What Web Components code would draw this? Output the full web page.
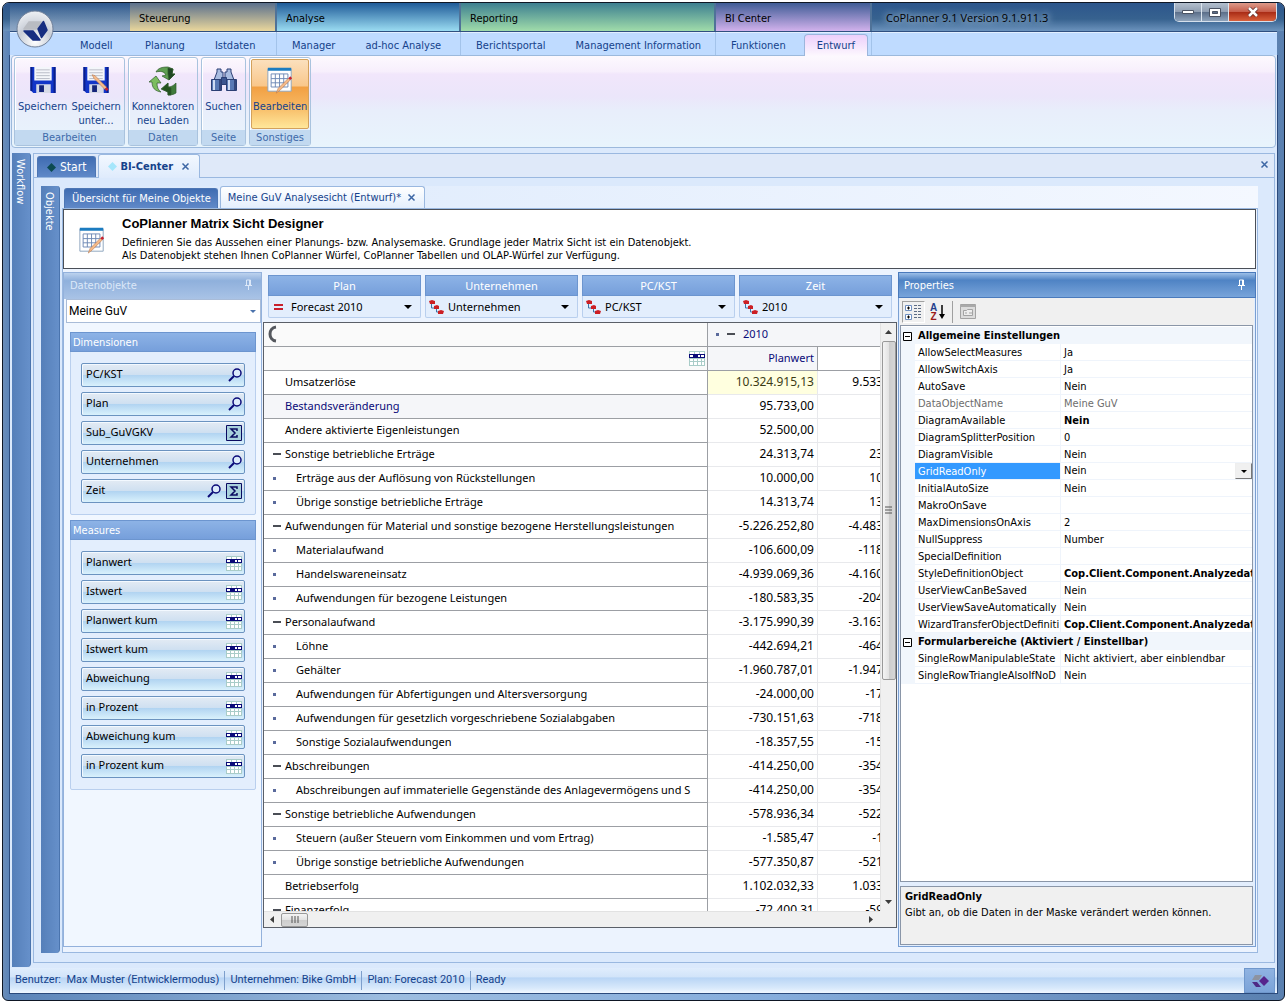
<!DOCTYPE html>
<html lang="de">
<head>
<meta charset="utf-8">
<title>CoPlanner 9.1</title>
<style>
  :root {
    --ui: "DejaVu Sans Condensed", Roboto, sans-serif;
    --grid: "Noto Sans", "Open Sans", sans-serif;
    --ink: #15428b;
    --line: #9ab8e0;
    --line-soft: #b9cfee;
    --head: linear-gradient(#8db3e6, #769fdb);
  }
  html, body { height: 100%; }
  body {
    margin: 0;
    padding: 2px;
    box-sizing: border-box;
    background: #fff;
    font: 11px/14px var(--ui);
    color: #000;
    overflow: hidden;
  }
</style>
</head>
<body>
<app-window>
  <ribbon-bar slot="ribbon"></ribbon-bar>
  <ribbon-body slot="ribbon">
    <ribbon-panel label="Bearbeiten">
      <ribbon-button icon="save">Speichern</ribbon-button>
      <ribbon-button icon="saveAs">Speichern<br>unter...</ribbon-button>
    </ribbon-panel>
    <ribbon-panel label="Daten">
      <ribbon-button icon="reload">Konnektoren<br>neu Laden</ribbon-button>
    </ribbon-panel>
    <ribbon-panel label="Seite">
      <ribbon-button icon="search">Suchen</ribbon-button>
    </ribbon-panel>
    <ribbon-panel label="Sonstiges">
      <ribbon-button icon="design" active>Bearbeiten</ribbon-button>
    </ribbon-panel>
  </ribbon-body>
  <dock-bar label="Workflow" slot="dock"></dock-bar>
  <outer-panel>
    <dock-bar label="Objekte" slot="dock"></dock-bar>
    <inner-panel>
      <page-banner slot="banner"></page-banner>
      <side-panel>
        <field-box label="Dimensionen"></field-box>
        <field-box label="Measures"></field-box>
      </side-panel>
      <matrix-view></matrix-view>
      <property-panel></property-panel>
    </inner-panel>
  </outer-panel>
  <status-bar slot="status"></status-bar>
</app-window>

<script>
const floppy = `
  <path d="M1 1h26v27H4l-3-3z" fill="#1235c8"/><path d="M1 1h2v25H1zM25 1h2v27h-2z" fill="#0a1f8a"/>
  <path d="M5 1h18v14H5z" fill="#f4f6fa"/><path d="M7 4h14M7 7h14M7 10h14M7 13h14" stroke="#b8bcc6"/>
  <path d="M7 19h15v9H7z" fill="#d6dae6"/><path d="M10 20h5v7h-5z" fill="#14247a"/>`;
const pencil = (x, y) => `<g transform="translate(${x} ${y})">
  <path d="M1 1l3 1 12 12-2 2L3 5z" fill="#f4b988" stroke="#b8764c" stroke-width=".6"/>
  <path d="M14 16l2-2 2 2-2 2z" fill="#c8202c"/></g>`;
const pencilUp = `<path d="M10 29l2-5 11-11 2 2-11 11z" fill="#f4b988" stroke="#b8764c" stroke-width=".6"/>
  <path d="M23 13l2-2 2 2-2 2z" fill="#c8202c"/>`;
const sheet = `
  <path d="M1 3h25v24H1z" fill="#fff" stroke="#8aa2bc"/><path d="M1 2h25v3H1z" fill="#1c7cc0"/>
  <path d="M4.500 8.500h18v14h-18zM4.500 13.500h18M4.500 18h18M9 8.500v14M13.500 8.500v14M18 8.500v14" fill="none" stroke="#6a86b4"/>`;

// name: [width, height, viewBox, body]
const ICONS = {
  save: [28, 28, "0 0 28 29", floppy],
  saveAs: [28, 28, "0 0 28 29", floppy + pencil(9, 8)],
  reload: [30, 30, "0 0 30 30", `
    <g stroke="#2f5a2c" stroke-width=".7">
    <path d="M8 6c2-4 6-5 12-5l5 2-1 5 3 0-6 6-7-4 4-1c-2-4-6-4-10-3z" fill="#5f9e52"/>
    <path d="M20 2l5 1-1 5 3 0-6 6-1-6z" fill="#1f4722"/>
    <path d="M1 16l7-6 5 7-4 0c0 4 1 7 4 9-6-1-9-4-9-10z" fill="#7cbd5f"/>
    <path d="M28 17v10c-3 2-6 2-8 2v-3l-7-3 7-6v4c3 0 5-1 8-4z" fill="#3f7a3a"/>
    <path d="M20 29v-3l-6-3 6-6v4l3 1v7z" fill="#23521f"/></g>`],
  search: [28, 28, "0 0 28 28", `
    <g fill="#5878b4" stroke="#2b3f74">
    <path d="M7 3h4v3h2v6h2V6h2V3h4v3l3 8H4l3-8z" fill="#a9bce0"/>
    <path d="M1.500 13.500h10v11h-10zM16.500 13.500h10v11h-10z"/>
    <path d="M11.500 11.500h5v7h-5z" fill="#3c5690"/></g>
    <path d="M4 14v10M19 14v10" stroke="#cfdcf4" stroke-width="2"/><path d="M10 14v10M25 14v10" stroke="#33477e" stroke-width="2"/>`],
  design: [28, 28, "0 0 28 30", sheet + pencilUp],
  orb: [38, 38, "0 0 38 38", `
    <defs><radialGradient id="o" cx=".5" cy=".85" r=".9"><stop offset="0" stop-color="#fff"/><stop offset=".5" stop-color="#c9ced7"/><stop offset="1" stop-color="#f3f5f8"/></radialGradient></defs>
    <circle cx="19" cy="19" r="18" fill="url(#o)" stroke="#6f7f98"/>
    <g stroke-width="1.500" stroke-linejoin="round">
    <path d="M13 12h12l-5 7H8z" fill="#b9bcc2" stroke="#b9bcc2"/>
    <path d="M8 21h9l7 9h-7z" fill="#172e80" stroke="#172e80"/>
    <path d="M27.500 11.500L31 20l-5.500 7.500L22 19z" fill="#172e80" stroke="#172e80"/></g>`],
  logo: [18, 14, "0 0 18 14", `
    <path d="M4 1h7L8 6H1z" fill="#8d93a0"/><path d="M1 8h5l4 5H5z" fill="#4f2a86"/><path d="M8 7l5-5 5 5-5 5z" fill="#56248c"/>`],
  close: [9, 9, "0 0 9 9", `<path d="M1.500 1.500l6 6M7.500 1.500l-6 6" stroke="#3c66a4" stroke-width="1.500"/>`],
  pin: [9, 11, "0 0 9 11", `<path d="M2.500 6V1h4v5M1 6.500h7M4.500 7v4M5.500 1v5" fill="none" stroke="currentColor"/>`],
  arrow: [8, 4, "0 0 8 4", `<path d="M0 0h8L4 4z" fill="currentColor"/>`],
  arrowSmall: [6, 3, "0 0 6 3", `<path d="M0 0h6L3 3z" fill="currentColor"/>`],
  equal: [13, 6, "0 0 13 6", `<path d="M2 1h9M2 5h9" stroke="#c8202c" stroke-width="2"/>`],
  tree: [15, 14, "0 0 15 14", `
    <path d="M2.500 3v5h5M7.500 8v4h4" fill="none" stroke="#3c74a8"/>
    <path d="M0 1l3-1 3 1v3H1zM5 6l3-1 2 1v3H5zM9 11l3-1 3 1-1 3H9z" fill="#cc1f24"/>`],
  lens: [14, 14, "0 0 14 14", `<circle cx="9" cy="5" r="4" fill="#dcebfb" stroke="#0a0a78" stroke-width="1.500"/><path d="M6 8l-5 5" stroke="#0a0a78" stroke-width="2"/>`],
  sum: [16, 16, "0 0 16 16", `<path d="M.5.5h15v15H.5z" fill="#a8d0dc" stroke="#0a0a60"/><path d="M11 6V4H5l4 4-4 4h6v-2" fill="none" stroke="#0a0a60" stroke-width="1.500"/>`],
  column: [16, 16, "0 0 16 16", `
    <path d="M0 1h16v15H0z" fill="#a9ccc8"/>
    <path d="M1 2h4v2H1zM6 2h4v2H6zM11 2h4v2h-4zM1 9h3v2H1zM5 9h3v2H5zM9 9h3v2H9zM13 9h2v2h-2zM1 12h3v3H1zM5 12h3v3H5zM9 12h3v3H9zM13 12h2v3h-2z" fill="#fff"/>
    <path d="M0 4h16v4H0z" fill="#0a0a78"/><path d="M1 5h3v2H1zM9 5h2v2H9zM12 5h3v2h-3z" fill="#fff"/>`],
  ring: [10, 18, "0 0 10 18", `<path d="M9 2C1 3 1 15 9 16" fill="none" stroke="#55585e" stroke-width="3"/>`],
  minus: [8, 2, "0 0 8 2", `<path d="M0 0h8v2H0z" fill="#4a4d55"/>`],
  dot: [3, 3, "0 0 3 3", `<path d="M0 0h3v3H0z" fill="#5a6a9c"/>`],
  up: [7, 4, "0 0 7 4", `<path d="M0 4L3.500 0 7 4z" fill="#3c3c3c"/>`],
  down: [7, 4, "0 0 7 4", `<path d="M0 0h7L3.500 4z" fill="#3c3c3c"/>`],
  left: [4, 7, "0 0 4 7", `<path d="M4 0v7L0 3.500z" fill="#3c3c3c"/>`],
  right: [4, 7, "0 0 4 7", `<path d="M0 0v7l4-3.500z" fill="#3c3c3c"/>`],
  grip: [8, 8, "0 0 8 8", `<path d="M1 0v7M4 0v7M7 0v7" stroke="#555"/>`],
  gripV: [8, 8, "0 0 8 8", `<path d="M0 1h7M0 4h7M0 7h7" stroke="#555"/>`],
  diamondDark: [9, 9, "0 0 9 9", `<path d="M4.500 0L9 4.500 4.500 9 0 4.500z" fill="#0c4a52"/>`],
  diamondLight: [9, 9, "0 0 9 9", `<path d="M4.500 0L9 4.500 4.500 9 0 4.500z" fill="#a5e6fb"/>`],
  categorized: [17, 16, "0 0 17 16", `
    <path d="M.5 1.500h6v5h-6zM.5 10.500h6v5h-6z" fill="#fff" stroke="#6f8fc0"/>
    <path d="M2 4h3M3.500 2.500v3M2 13h3M3.500 11.500v3" stroke="#000"/>
    <path d="M9 1.500h3M13 1.500h3M9 4.500h3M13 4.500h3M9 7.500h3M13 7.500h3M9 10.500h3M13 10.500h3M9 13.500h3M13 13.500h3" stroke="#5d6c84"/>`],
  sortArrow: [6, 14, "0 0 6 14", `<path d="M3 0v12" stroke="#000" stroke-width="1.500"/><path d="M0 9h6l-3 5z"/>`],
  pages: [16, 15, "0 0 16 15", `<path d="M.5.5h15v14H.5z" fill="#dcdcdc" stroke="#a3a3a3"/><path d="M0 1h16v2H0z" fill="#a9a9a9"/><path d="M3.500 6.500h3l1-1h5v6h-9zM5 9h2M9 9h3" fill="#eee" stroke="#a3a3a3"/>`],
  collapse: [9, 9, "0 0 9 9", `<path d="M.5.5h8v8h-8z" fill="#fff" stroke="#000"/><path d="M2 4.500h5" stroke="#000"/>`],
  winMin: [12, 5, "0 0 12 5", `<path d="M.5.500h11v3H.5z" fill="#fff" stroke="#4a5262"/>`],
  winMax: [12, 9, "0 0 12 9", `<path d="M2 2h8v5H2z" fill="none" stroke="#fff" stroke-width="2.500"/><path d="M.5.5h11v8H.5zM3.500 3.500h5v2h-5z" fill="none" stroke="#4a5262"/>`],
  winClose: [12, 10, "0 0 12 10", `<path d="M2 1l8 8M10 1l-8 8" stroke="#5c2a28" stroke-width="4"/><path d="M2 1l8 8M10 1l-8 8" stroke="#fff" stroke-width="2.500"/>`],
};

function icon(name, cls = "") {
  const [w, h, box, body] = ICONS[name];
  return `<svg class="${cls}" width="${w}" height="${h}" viewBox="${box}" aria-hidden="true">${body}</svg>`;
}

const RESET = `
  * { box-sizing: border-box; }
  svg { display: block; flex: none; }
  button { margin: 0; padding: 0; border: 0; background: none; color: inherit; font: inherit; }
  select { appearance: none; margin: 0; border: 0; border-radius: 0; background: none; color: inherit; font: inherit; }
`;

class UiElement extends HTMLElement {
  constructor() {
    super();
    this.attachShadow({ mode: "open" });
  }

  connectedCallback() {
    this.shadowRoot.innerHTML = `<style>${RESET}${this.css()}</style>${this.html()}`;
  }
}

class AppWindow extends UiElement {
  css() {
    return `
      :host {
        display: flex;
        flex-direction: column;
        height: 100%;
        box-sizing: border-box;
        border: 1px solid #0e1624;
        border-radius: 7px 7px 6px 6px;
        overflow: hidden;
        background: linear-gradient(90deg, #6b8db8, #5b84b8 6px, #9dbde0 30%, #86addc 60%, #5a80b0);
      }
      .client {
        flex: 1;
        min-height: 0;
        display: flex;
        flex-direction: column;
        margin: 0 6px 6px;
        border: 1px solid #2b4a7c;
        border-top: 0;
        background: #dbe9fc;
      }
      .work {
        flex: 1;
        min-height: 0;
        display: flex;
        gap: 2px;
        padding: 5px 2px 1px;
      }
    `;
  }

  html() {
    return `
      <slot name="ribbon"></slot>
      <div class="client">
        <div class="work"><slot name="dock"></slot><slot></slot></div>
        <slot name="status"></slot>
      </div>
    `;
  }
}

const GROUPS = [
  { label: "", tabs: ["Modell"], cls: "first" },
  { label: "Steuerung", tabs: ["Planung", "Istdaten"], from: "#5b708c", to: "#ead79c" },
  { label: "Analyse", tabs: ["Manager", "ad-hoc Analyse"], from: "#1f5b98", to: "#9bdcf2" },
  { label: "Reporting", tabs: ["Berichtsportal", "Management Information"], from: "#3d7f90", to: "#a0dcaa" },
  { label: "BI Center", tabs: ["Funktionen", "Entwurf"], from: "#3f5c96", to: "#d2b2ec" },
];

class RibbonBar extends UiElement {
  css() {
    return `
      :host {
        display: grid;
        grid-template-columns: 120px 147px 184px 255px 156px 1fr;
        position: relative;
        padding: 0 7px;
        background: linear-gradient(#2c568c, #37628f 16px, #6c93bd 28px, transparent 28px);
      }
      .group { display: flex; flex-direction: column; }
      .head {
        height: 28px;
        padding: 9px 9px 0;
        line-height: 14px;
        border-right: 2px solid #4f7298;
      }
      .first .head, .last .head { border: 0; background: none; }
      .first .head { background: radial-gradient(at 50% 100%, #a5b6cc, transparent 80%); }
      .tabs {
        display: flex;
        gap: 6px;
        height: 24px;
        padding-left: 3px;
        border-top: 1px solid #2f4f80;
        background: #bfdbff;
        color: var(--ink);
        box-shadow: inset -1px 0 #a3c3ea, inset 0 1px #e2efff;
      }
      .first .tabs { padding-left: 58px; box-shadow: inset 0 1px #e2efff; }
      .last .tabs { box-shadow: inset 0 1px #e2efff; }
      .tabs button { padding: 4px 12px 0; white-space: nowrap; }
      .tabs button.active {
        position: relative;
        z-index: 1;
        margin: 2px 0 -1px;
        padding-top: 1px;
        border: 1px solid #9cb6dc;
        border-bottom: 0;
        border-radius: 4px 4px 0 0;
        background: linear-gradient(#eccffb, #fdf8fe);
      }
      .last .head { display: flex; justify-content: space-between; padding: 0; }
      .title {
        padding: 7px 14px 0;
        font: 11px/15px "Open Sans", sans-serif;
        text-shadow: 0 0 6px #b9cfe6, 0 0 8px #b9cfe6;
      }
      .buttons {
        display: flex;
        height: 19px;
        border: 1px solid #d5e0ec;
        border-top: 0;
        border-radius: 0 0 5px 5px;
        overflow: hidden;
      }
      .buttons button {
        display: grid;
        place-items: center;
        width: 27px;
        border-right: 1px solid #dce5ee;
        background: linear-gradient(#b3bfce, #8d9cb0 50%, #5a6d88 50%, #8ea3bb);
      }
      .buttons .x { width: 47px; border: 0; background: linear-gradient(#dc9a8a, #c65b48 50%, #a82a14 50%, #d8603c); }
      .orb { position: absolute; left: 13px; top: 7px; z-index: 2; }
    `;
  }

  html() {
    return `
      ${GROUPS.map(
        (g) => `
        <div class="group ${g.cls || ""}">
          <div class="head" style="background-image: linear-gradient(${g.from || "transparent"}, ${g.to || "#8ea6c4"})">${g.label}</div>
          <div class="tabs">
            ${g.tabs.map((t) => `<button class="${t === "Entwurf" ? "active" : ""}">${t}</button>`).join("")}
          </div>
        </div>`,
      ).join("")}
      <div class="group last">
        <div class="head">
          <span class="title">CoPlanner 9.1 Version 9.1.911.3</span>
          <span class="buttons">
            <button aria-label="Minimieren">${icon("winMin")}</button>
            <button aria-label="Maximieren">${icon("winMax")}</button>
            <button class="x" aria-label="Schließen">${icon("winClose")}</button>
          </span>
        </div>
        <div class="tabs"></div>
      </div>
      <button class="orb" aria-label="Menü">${icon("orb")}</button>
    `;
  }
}

class RibbonBody extends UiElement {
  css() {
    return `
      :host {
        display: block;
        margin: 0 6px;
        padding: 0 1px;
        border: 1px solid #2b4a7c;
        border-width: 0 1px;
        background: #dbe9fc;
      }
      .strip {
        display: flex;
        gap: 3px;
        height: 93px;
        padding: 1px 2px;
        border: 1px solid #9cb9dc;
        border-radius: 4px;
        background: linear-gradient(#fdf9fe, #f7effc 17%, #f1e6fb 20%, #ebe6fa 45%, #e8eefb 60%, #e8f4fc);
      }
    `;
  }

  html() {
    return `<div class="strip"><slot></slot></div>`;
  }
}

class RibbonPanel extends UiElement {
  css() {
    return `
      :host {
        display: flex;
        flex-direction: column;
        border: 1px solid #a9c3de;
        border-radius: 3px;
        box-shadow: inset 1px 1px #fff;
      }
      .buttons { flex: 1; display: flex; padding: 1px; }
      .label { height: 15px; background: #c2d9f0; color: #3e6aaa; text-align: center; line-height: 15px; }
    `;
  }

  html() {
    return `<div class="buttons"><slot></slot></div><div class="label">${this.getAttribute("label")}</div>`;
  }
}

class RibbonButton extends UiElement {
  css() {
    return `
      :host { display: flex; }
      button {
        display: flex;
        flex-direction: column;
        align-items: center;
        gap: 6px;
        padding: 6px 1px 0;
        border: 1px solid transparent;
        border-radius: 2px;
        color: var(--ink);
        text-align: center;
        line-height: 14px;
      }
      .icon { display: grid; place-items: center; height: 28px; }
      :host([active]) button {
        border-color: #d3a15c;
        background: linear-gradient(#fbe0bd, #f9c78b 38%, #f2a043 40%, #f6b55f 65%, #ffe79a);
      }
    `;
  }

  html() {
    return `<button><span class="icon">${icon(this.getAttribute("icon"))}</span><span><slot></slot></span></button>`;
  }
}

class DockBar extends UiElement {
  css() {
    return `
      :host {
        display: block;
        flex: none;
        width: 19px;
        box-sizing: border-box;
        padding: 6px 0 0 1px;
        border-right: 1px solid #4a74ae;
        border-radius: 0 3px 4px 0;
        background: linear-gradient(90deg, #557fb9, #6690ca);
        color: #fff;
      }
      span { writing-mode: vertical-rl; line-height: 14px; }
    `;
  }

  html() {
    return `<span>${this.getAttribute("label")}</span>`;
  }
}

const TAB_CSS = `
  .strip { display: flex; align-items: flex-end; flex: none; }
  .tab {
    display: flex;
    align-items: center;
    white-space: nowrap;
    border: 1px solid #4d76b4;
    border-bottom: 0;
    border-radius: 3px 3px 0 0;
    background: linear-gradient(#3f6cb2, #6089c8);
    color: #fff;
  }
  .tab.active {
    border-color: var(--line);
    background: linear-gradient(#f2f8ff, #dfebfc);
    color: var(--ink);
  }
`;

class OuterPanel extends UiElement {
  css() {
    return `
      ${TAB_CSS}
      :host {
        flex: 1;
        min-width: 0;
        display: flex;
        flex-direction: column;
        margin-bottom: 4px;
        border: 1px solid var(--line);
        background: #dbe9fc;
      }
      .strip { gap: 2px; height: 24px; padding: 0 5px 0 3px; border-bottom: 1px solid var(--line); background: #dfe9f9; }
      .tab { gap: 4px; height: 21px; padding: 0 9px; font: 12px/15px var(--ui); }
      .tab.active { gap: 3px; height: 24px; margin-bottom: -1px; font-weight: bold; font-size: 11px; }
      .tab.active .x { margin-left: 5px; }
      .end { margin: 0 0 8px auto; }
      .content { flex: 1; min-height: 0; display: flex; gap: 2px; padding: 8px 16px 9px 7px; }
    `;
  }

  html() {
    return `
      <div class="strip">
        <button class="tab">${icon("diamondDark")}Start</button>
        <button class="tab active">${icon("diamondLight")}BI-Center${icon("close", "x")}</button>
        <button class="end" aria-label="Schließen">${icon("close")}</button>
      </div>
      <div class="content"><slot name="dock"></slot><slot></slot></div>
    `;
  }
}

class InnerPanel extends UiElement {
  css() {
    return `
      ${TAB_CSS}
      :host { flex: 1; min-width: 0; display: flex; flex-direction: column; }
      .strip { gap: 2px; height: 22px; padding-left: 2px; background: linear-gradient(90deg, #dbe9fc, #f4f8ff); }
      .tab { height: 20px; padding: 0 6px 0 7px; }
      .tab.active { gap: 6px; height: 22px; padding-right: 8px; background: linear-gradient(#ffffff, #e4effd); }
      .body {
        flex: 1;
        min-height: 0;
        display: flex;
        flex-direction: column;
        gap: 3px;
        padding: 0 1px 5px 0;
        border: 1px solid var(--line);
        background: #ecf3fe;
      }
      .columns { flex: 1; min-height: 0; display: flex; gap: 1px; }
    `;
  }

  html() {
    return `
      <div class="strip">
        <button class="tab">Übersicht für Meine Objekte</button>
        <button class="tab active">Meine GuV Analysesicht (Entwurf)*${icon("close")}</button>
      </div>
      <div class="body">
        <slot name="banner"></slot>
        <div class="columns"><slot></slot></div>
      </div>
    `;
  }
}

class PageBanner extends UiElement {
  css() {
    return `
      :host {
        display: flex;
        gap: 16px;
        height: 60px;
        box-sizing: border-box;
        padding: 6px 14px 0;
        border: 1px solid #4a4f58;
        background: #fff;
      }
      svg { margin-top: 10px; }
      h1 { margin: 0 0 5px; font: bold 13px/15px "Liberation Sans", Arial, sans-serif; }
      p { margin: 0; line-height: 13px; }
    `;
  }

  html() {
    return `
      ${icon("design")}
      <div>
        <h1>CoPlanner Matrix Sicht Designer</h1>
        <p>Definieren Sie das Aussehen einer Planungs- bzw. Analysemaske. Grundlage jeder Matrix Sicht ist ein Datenobjekt.<br>
        Als Datenobjekt stehen Ihnen CoPlanner Würfel, CoPlanner Tabellen und OLAP-Würfel zur Verfügung.</p>
      </div>
    `;
  }
}

class SidePanel extends UiElement {
  css() {
    return `
      :host {
        flex: none;
        width: 199px;
        box-sizing: border-box;
        display: flex;
        flex-direction: column;
        border: 1px solid #93b1dc;
        background: #f1f7ff;
      }
      header {
        display: flex;
        justify-content: space-between;
        height: 26px;
        padding: 6px 8px 0 6px;
        background: linear-gradient(#bcd2ee, #8fb0dc 30%, #a9c3e6);
        color: #dce8f8;
      }
      .combo { display: grid; align-items: center; height: 24px; margin: 0 0 9px 2px; border: 1px solid #a9bcd8; background: #fff; }
      .combo > * { grid-area: 1 / 1; }
      .combo select { width: 100%; padding: 0 2px; font: 12px/15px Roboto, sans-serif; }
      .combo svg { justify-self: end; margin-right: 4px; color: #4a72ac; pointer-events: none; }
      .boxes { display: flex; flex-direction: column; gap: 5px; padding: 0 5px 0 6px; }
    `;
  }

  html() {
    return `
      <header><span>Datenobjekte</span>${icon("pin")}</header>
      <label class="combo">
        <select aria-label="Datenobjekt"><option>Meine GuV</option></select>
        ${icon("arrowSmall")}
      </label>
      <div class="boxes"><slot></slot></div>
    `;
  }
}

const FIELDS = {
  Dimensionen: [
    ["PC/KST", "lens"],
    ["Plan", "lens"],
    ["Sub_GuVGKV", "sum"],
    ["Unternehmen", "lens"],
    ["Zeit", "lens", "sum"],
  ],
  Measures: [
    "Planwert", "Istwert", "Planwert kum", "Istwert kum",
    "Abweichung", "in Prozent", "Abweichung kum", "in Prozent kum",
  ].map((name) => [name, "column"]),
};

class FieldBox extends UiElement {
  css() {
    return `
      :host { display: block; border: 1px solid var(--line-soft); border-radius: 2px; background: #e3eefd; }
      h2 {
        height: 20px;
        margin: -1px -1px 0;
        padding: 2px;
        border: 1px solid #6c95cf;
        background: var(--head);
        color: #fff;
        font: 11px/15px var(--ui);
      }
      .list { display: flex; flex-direction: column; gap: 5px; padding: 11px 10px; }
      button {
        display: flex;
        align-items: center;
        gap: 5px;
        height: 24px;
        padding: 0 2px 0 4px;
        border: 1px solid #6b93c0;
        border-radius: 2px;
        background: linear-gradient(#e3ebf4, #cfe0f1 48%, #b0d3f1 50%, #d9f1fc);
        box-shadow: inset 1px 1px #f3f9ff;
        font: 11px/14px var(--grid);
        text-align: left;
      }
      button span { flex: 1; padding-bottom: 2px; }
    `;
  }

  html() {
    const label = this.getAttribute("label");
    return `
      <h2>${label}</h2>
      <div class="list">
        ${FIELDS[label]
          .map(([name, ...icons]) => `<button><span>${name}</span>${icons.map((i) => icon(i)).join("")}</button>`)
          .join("")}
      </div>
    `;
  }
}

const FILTERS = [
  ["Plan", "equal", "Forecast 2010"],
  ["Unternehmen", "tree", "Unternehmen"],
  ["PC/KST", "tree", "PC/KST"],
  ["Zeit", "tree", "2010"],
];

// marker, level, text, plan value, next column
const ROWS = [
  ["", 1, "Umsatzerlöse", "10.324.915,13", "9.533"],
  ["", 1, "Bestandsveränderung", "95.733,00", ""],
  ["", 1, "Andere aktivierte Eigenleistungen", "52.500,00", ""],
  ["minus", 1, "Sonstige betriebliche Erträge", "24.313,74", "23"],
  ["dot", 2, "Erträge aus der Auflösung von Rückstellungen", "10.000,00", "10"],
  ["dot", 2, "Übrige sonstige betriebliche Erträge", "14.313,74", "13"],
  ["minus", 1, "Aufwendungen für Material und sonstige bezogene Herstellungsleistungen", "-5.226.252,80", "-4.483"],
  ["dot", 2, "Materialaufwand", "-106.600,09", "-118"],
  ["dot", 2, "Handelswareneinsatz", "-4.939.069,36", "-4.160"],
  ["dot", 2, "Aufwendungen für bezogene Leistungen", "-180.583,35", "-204"],
  ["minus", 1, "Personalaufwand", "-3.175.990,39", "-3.163"],
  ["dot", 2, "Löhne", "-442.694,21", "-464"],
  ["dot", 2, "Gehälter", "-1.960.787,01", "-1.947"],
  ["dot", 2, "Aufwendungen für Abfertigungen und Altersversorgung", "-24.000,00", "-17"],
  ["dot", 2, "Aufwendungen für gesetzlich vorgeschriebene Sozialabgaben", "-730.151,63", "-718"],
  ["dot", 2, "Sonstige Sozialaufwendungen", "-18.357,55", "-15"],
  ["minus", 1, "Abschreibungen", "-414.250,00", "-354"],
  ["dot", 2, "Abschreibungen auf immaterielle Gegenstände des Anlagevermögens und S", "-414.250,00", "-354"],
  ["minus", 1, "Sonstige betriebliche Aufwendungen", "-578.936,34", "-522"],
  ["dot", 2, "Steuern (außer Steuern vom Einkommen und vom Ertrag)", "-1.585,47", "-1"],
  ["dot", 2, "Übrige sonstige betriebliche Aufwendungen", "-577.350,87", "-521"],
  ["", 1, "Betriebserfolg", "1.102.032,33", "1.033"],
  ["minus", 1, "Finanzerfolg", "-72.400,31", "-59"],
];

class MatrixView extends UiElement {
  css() {
    return `
      :host { flex: 1; min-width: 0; display: flex; flex-direction: column; gap: 4px; padding: 3px 0 19px; font-family: var(--grid); }
      .filters { display: flex; gap: 4px; padding: 0 5px; }
      .filter {
        flex: 1;
        display: grid;
        grid-template-rows: 21px 21px;
        border: 1px solid var(--line-soft);
        border-top: 0;
        border-radius: 2px;
        background: #e3eefd;
      }
      .filter > span { border: 1px solid #6c95cf; margin: 0 -1px; background: var(--head); color: #fff; text-align: center; line-height: 20px; }
      .pick { display: grid; grid-template-columns: 15px 1fr 8px; align-items: center; gap: 4px; padding: 0 8px 0 3px; }
      .pick select { grid-area: 1 / 2 / 2 / 4; width: 100%; padding: 0; }
      .pick svg:last-child { grid-area: 1 / 3; pointer-events: none; }
      .grid {
        flex: 1;
        min-height: 0;
        display: grid;
        grid-template: 1fr 16px / 1fr 16px;
        border: 1px solid #5a5f68;
        background: #f0f0f0;
      }
      .view { overflow: hidden; background: #fff; }
      table { width: calc(100% + 5px); table-layout: fixed; border-collapse: separate; border-spacing: 0; }
      .value { width: 110px; }
      .next-value { width: 67px; }
      th, td { height: 24px; padding: 0 0 1px; overflow: hidden; white-space: nowrap; font-weight: normal; }
      th { text-align: left; border: 1px solid #9c9fa4; border-width: 0 1px 1px 0; }
      thead th { background: #fafafa; color: #0a0a78; }
      thead th.r, thead th.span { background: #f5f6f9; }
      thead th.span { border-right: 0; }
      thead th.next { background: #fff; border-right: 0; }
      th.r { padding-right: 3px; text-align: right; }
      td { padding-right: 3px; border: 1px solid #e8e9ec; border-width: 0 1px 1px 0; text-align: right; font-size: 12px; }
      td:last-child { padding-right: 2px; border-right: 0; }
      .row { display: flex; align-items: center; }
      .mark { display: flex; flex: none; width: 21px; padding-left: 9px; }
      .l2 .mark { width: 32px; }
      tr.sel th { background: #f5f6f9; color: #0a0a78; }
      td.hot { background: #ffffdf; color: #3c3c14; }
      thead .row { gap: 8px; padding-left: 8px; }
      thead .ring { padding-left: 3px; }
      thead .end { justify-content: flex-end; padding-right: 2px; }
      .bar { display: flex; justify-content: space-between; align-items: center; gap: 7px; }
      .bar.v { flex-direction: column; padding: 7px 0; border-left: 1px solid #e2e2e2; }
      .bar.h { padding: 0 7px 0 6px; border-top: 1px solid #e2e2e2; }
      .thumb { display: grid; place-items: center; border: 1px solid #999; border-radius: 2px; }
      .v .thumb { width: 14px; flex: 0 0 59%; margin-bottom: auto; background: linear-gradient(90deg, #f4f4f4, #e2e2e2 50%, #cdcdcd 50%, #d6d6d6); }
      .h .thumb { width: 27px; height: 14px; margin-right: auto; background: linear-gradient(#f4f4f4, #e2e2e2 50%, #cdcdcd 50%, #d6d6d6); }
    `;
  }

  html() {
    return `
      <div class="filters">
        ${FILTERS.map(
          ([name, glyph, value]) => `
          <label class="filter">
            <span>${name}</span>
            <div class="pick">${icon(glyph)}<select><option>${value}</option></select>${icon("arrow")}</div>
          </label>`,
        ).join("")}
      </div>
      <div class="grid">
        <div class="view">
          <table>
            <colgroup><col><col class="value"><col class="next-value"></colgroup>
            <thead>
              <tr>
                <th><div class="row ring">${icon("ring")}</div></th>
                <th class="span" colspan="2"><div class="row">${icon("dot")}${icon("minus")}<span>2010</span></div></th>
              </tr>
              <tr>
                <th><div class="row end">${icon("column")}</div></th>
                <th class="r">Planwert</th>
                <th class="next"></th>
              </tr>
            </thead>
            <tbody>
              ${ROWS.map(
                ([mark, level, text, value, next], i) => `
                <tr class="l${level}${i === 1 ? " sel" : ""}">
                  <th><div class="row"><span class="mark">${mark ? icon(mark) : ""}</span>${text}</div></th>
                  <td class="${i === 0 ? "hot" : ""}">${value}</td>
                  <td>${next}</td>
                </tr>`,
              ).join("")}
            </tbody>
          </table>
        </div>
        <div class="bar v">${icon("up")}<div class="thumb">${icon("gripV")}</div>${icon("down")}</div>
        <div class="bar h">${icon("left")}<div class="thumb">${icon("grip")}</div>${icon("right")}</div>
      </div>
    `;
  }
}

const PROPS = [
  ["Allgemeine Einstellungen"],
  ["AllowSelectMeasures", "Ja"],
  ["AllowSwitchAxis", "Ja"],
  ["AutoSave", "Nein"],
  ["DataObjectName", "Meine GuV", "dim"],
  ["DiagramAvailable", "Nein", "strong"],
  ["DiagramSplitterPosition", "0"],
  ["DiagramVisible", "Nein"],
  ["GridReadOnly", "Nein", "sel"],
  ["InitialAutoSize", "Nein"],
  ["MakroOnSave", ""],
  ["MaxDimensionsOnAxis", "2"],
  ["NullSuppress", "Number"],
  ["SpecialDefinition", ""],
  ["StyleDefinitionObject", "Cop.Client.Component.Analyzedat", "strong"],
  ["UserViewCanBeSaved", "Nein"],
  ["UserViewSaveAutomatically", "Nein"],
  ["WizardTransferObjectDefiniti", "Cop.Client.Component.Analyzedat", "strong"],
  ["Formularbereiche (Aktiviert / Einstellbar)"],
  ["SingleRowManipulableState", "Nicht aktiviert, aber einblendbar"],
  ["SingleRowTriangleAlsoIfNoD", "Nein"],
];

class PropertyPanel extends UiElement {
  css() {
    return `
      :host {
        flex: none;
        width: 358px;
        box-sizing: border-box;
        display: flex;
        flex-direction: column;
        padding: 0 2px 1px 1px;
        border: 1px solid #7a9fd2;
        background: #e3eefd;
      }
      header {
        display: flex;
        justify-content: space-between;
        height: 26px;
        margin: -1px -3px 0 -2px;
        padding: 6px 9px 0 5px;
        border: 1px solid #4a7abc;
        background: linear-gradient(#9cbfe8, #4f83c4 30%, #78a4da);
        color: #fff;
      }
      .tools { display: flex; align-items: center; gap: 3px; height: 27px; margin-right: -1px; padding: 0 2px; background: #f0f0f0; }
      .tools button { display: flex; align-items: center; height: 22px; padding: 0 2px; }
      .tools .on { border: 1px solid #a0a0a0; border-color: #a0a0a0 #fff #fff #a0a0a0; }
      .tools hr { width: 1px; height: 22px; margin: 0 2px; border: 0; background: #a0a0a0; }
      .az { margin-right: 2px; font: bold 10px/9px "Liberation Sans", sans-serif; color: #25408c; }
      .az b { display: block; color: #9a1c1c; }
      .list { flex: 1; min-height: 0; overflow: hidden; border: 1px solid #8a96a8; background: #fff; }
      table { width: 100%; table-layout: fixed; margin-top: 1px; border-spacing: 0; }
      col.g { width: 14px; }
      col.n { width: 146px; }
      th, td { height: 17px; padding: 1px 0 0; overflow: hidden; border-bottom: 1px solid #eff4fb; line-height: 14px; text-align: left; white-space: nowrap; font-weight: normal; }
      .g { border: 0; background: #f1f6fc; }
      .g svg { margin-left: 2px; }
      .cat { padding-left: 3px; border: 0; background: #f1f6fc; font-weight: bold; }
      .n { padding-left: 3px; border-right: 1px solid #eff4fb; }
      .v { padding-left: 3px; }
      .dim { color: #6d6d6d; }
      .strong .v { font-weight: bold; }
      .sel .n { background: #3399ff; color: #fff; }
      .sel .v { padding-top: 0; }
      .edit { display: grid; grid-template-columns: 1fr 17px; align-items: center; }
      .edit select { grid-area: 1 / 1 / 2 / 3; width: 100%; padding: 0; }
      .drop {
        grid-area: 1 / 2;
        display: grid;
        place-items: center;
        height: 16px;
        border: 1px solid #888;
        border-color: #eee #777 #777 #eee;
        background: #f0f0f0;
        pointer-events: none;
      }
      .help { height: 59px; margin-top: 4px; padding: 3px 4px; border: 1px solid #8a96a8; background: #f0f0f0; }
      .help p { margin: 2px 0 0; }
    `;
  }

  row([name, value, cls = ""]) {
    if (value === undefined) {
      return `<tr><td class="g">${icon("collapse")}</td><th class="cat" colspan="2">${name}</th></tr>`;
    }
    const cell = cls === "sel"
      ? `<div class="edit"><select aria-label="${name}"><option>${value}</option></select><span class="drop">${icon("arrowSmall")}</span></div>`
      : value;
    return `<tr class="${cls}"><td class="g"></td><th class="n">${name}</th><td class="v">${cell}</td></tr>`;
  }

  html() {
    return `
      <header><span>Properties</span>${icon("pin")}</header>
      <div class="tools">
        <button class="on" aria-label="Nach Kategorien">${icon("categorized")}</button>
        <button aria-label="Alphabetisch"><span class="az">A<b>Z</b></span>${icon("sortArrow")}</button>
        <hr>
        <button aria-label="Eigenschaftenseiten" disabled>${icon("pages")}</button>
      </div>
      <div class="list">
        <table>
          <colgroup><col class="g"><col class="n"><col></colgroup>
          ${PROPS.map((p) => this.row(p)).join("")}
        </table>
      </div>
      <div class="help"><b>GridReadOnly</b><p>Gibt an, ob die Daten in der Maske verändert werden können.</p></div>
    `;
  }
}

class StatusBar extends UiElement {
  css() {
    return `
      :host {
        display: flex;
        align-items: stretch;
        flex: none;
        height: 25px;
        padding-right: 2px;
        background: linear-gradient(#e0edfd, #d2e4f9 35%, #b9d5f5 40%, #d8e9fb 80%, #f0f7ff);
        color: var(--ink);
        font-family: Roboto, sans-serif;
      }
      span { margin: 3px 0; padding: 2px 5px 0; border-right: 1px solid #7d9fcc; white-space: pre; }
      span:nth-of-type(4) { border: 0; }
      .logo { display: grid; place-items: center; width: 31px; margin-left: auto; border: 1px solid #6f97cc; background: linear-gradient(#8fb3e2, #7ba3d8); }
    `;
  }

  html() {
    return `
      <span>Benutzer:  Max Muster (Entwicklermodus)</span><span>Unternehmen: Bike GmbH</span><span>Plan: Forecast 2010</span><span>Ready</span>
      <div class="logo">${icon("logo")}</div>
    `;
  }
}

customElements.define("app-window", AppWindow);
customElements.define("ribbon-bar", RibbonBar);
customElements.define("ribbon-body", RibbonBody);
customElements.define("ribbon-panel", RibbonPanel);
customElements.define("ribbon-button", RibbonButton);
customElements.define("dock-bar", DockBar);
customElements.define("outer-panel", OuterPanel);
customElements.define("inner-panel", InnerPanel);
customElements.define("page-banner", PageBanner);
customElements.define("side-panel", SidePanel);
customElements.define("field-box", FieldBox);
customElements.define("matrix-view", MatrixView);
customElements.define("property-panel", PropertyPanel);
customElements.define("status-bar", StatusBar);
</script>
</body>
</html>
